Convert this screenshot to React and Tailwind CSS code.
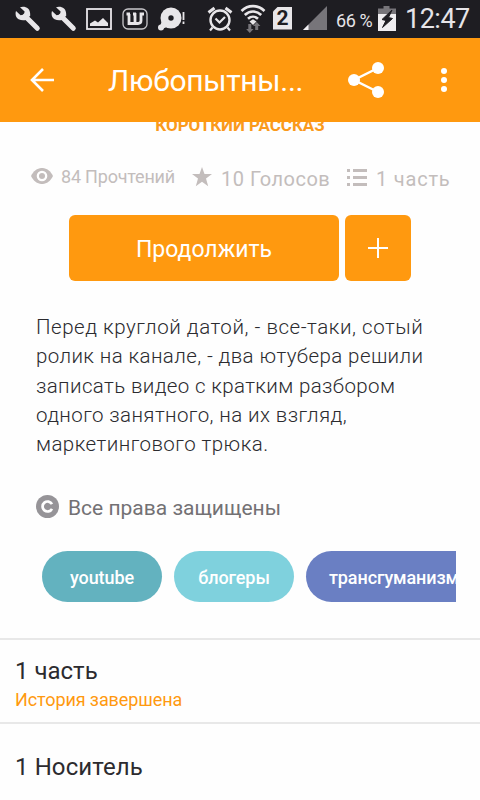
function Wrench() {
  return (
    <svg className="h-[26px] w-[26px] shrink-0" viewBox="0 0 26 26">
      <path d="M10 10 22.300 22.300" stroke="#e8e6e9" strokeWidth="5" strokeLinecap="round" />
      <path d="M5 1.200 9.600 5.400 9 8.600 5.600 9.200 1 5C-.1 8.500 1 11.800 3.600 13.300c2.400 1.200 5 1.300 7.400.7l4.200-4.200C15.300 7 15 4.400 13 2.500 11 .7 7.800.2 5 1.200Z" fill="#e8e6e9" />
    </svg>
  );
}

function StatusBar() {
  return (
    <div className="flex h-[38px] shrink-0 items-center bg-[#1e1d22] pl-[15px] text-[#e6e4e8]">
      <Wrench />
      <div className="w-[10px] shrink-0" />
      <Wrench />
      <svg className="ml-[9px] h-[22px] w-[26px] shrink-0" viewBox="0 0 26 22">
        <rect x="1" y="1" width="24" height="20" fill="none" stroke="#e8e6e9" strokeWidth="1.8" />
        <path d="M4 18v-2.500l5-3 3 2 5-4.500 5 5v3Z" fill="#e8e6e9" />
      </svg>
      <svg className="ml-[10px] h-[22px] w-[26px] shrink-0" viewBox="0 0 26 22">
        <rect x="1" y="1" width="24" height="20" rx="5" fill="none" stroke="#c9c7cb" strokeWidth="1.300" />
        <path d="M4.500 6h3.500M7 6V15.500H16c2 0 3-1 3-3V6h3M13 5v10.500M11 6h3" fill="none" stroke="#e8e6e9" strokeWidth="2.800" />
      </svg>
      <svg className="ml-[10px] h-[24px] w-[27px] shrink-0" viewBox="0 0 27 24">
        <circle cx="13" cy="11" r="10.500" fill="#e8e6e9" />
        <path d="m4 14-2 5 2 3 5-2 3-2Z" fill="#e8e6e9" />
        <circle cx="3" cy="20.500" r="3" fill="#e8e6e9" />
        <circle cx="13" cy="11" r="2.700" fill="#1e1d22" />
        <path d="M25.500 5v8M25.500 14.500V17" stroke="#e8e6e9" strokeWidth="1.800" />
      </svg>
      <svg className="ml-[22px] h-[26px] w-[26px] shrink-0" viewBox="0 0 26 26" fill="none" stroke="#e8e6e9">
        <circle cx="13" cy="14" r="9.500" strokeWidth="2.400" />
        <path d="m8.500 12.500 4 4 5.500-5.500M5.500 21.500l-2.500 3M20.500 21.500l2.500 3" strokeWidth="2.200" />
        <path d="m1.500 6.500 6-4.500M24.500 6.500l-6-4.500" strokeWidth="3" />
      </svg>
      <svg className="ml-[7px] h-[30px] w-[26px] shrink-0" viewBox="0 0 26 30" fill="none" stroke="#e8e6e9">
        <path d="M1.500 7c6.500-6.500 16.500-6.500 23 0M4.800 11c4.800-4.700 11.600-4.700 16.400 0M8 14.800c3-2.800 7-2.800 10 0" strokeWidth="2.600" />
        <path d="m9.500 17.500 3.500-2.200 3.500 2.200-3.500 3.500Z" fill="#e8e6e9" stroke="none" />
        <path d="M8.300 20h3v5h2.200l-3.700 4-3.700-4h2.200ZM15.200 26h3v-4h2.200l-3.700-4-3.700 4h2.200Z" fill="#77757a" stroke="none" />
      </svg>
      <div className="mt-[-2px] ml-[7px] flex h-[23px] w-[19px] shrink-0 items-center justify-center bg-[#e8e6e9] pt-px text-[21px] leading-none font-bold text-[#1e1d22] [clip-path:polygon(5px_0,100%_0,100%_100%,0_100%,0_5px)]">
        2
      </div>
      <svg className="mt-[-2px] ml-[11px] h-[24px] w-[24px] shrink-0" viewBox="0 0 24 24">
        <path d="M24 0v24H0Z" fill="#77757a" />
        <path d="M5.500 18.500v5.500H0Z" fill="#f2f0f3" />
      </svg>
      <div className="ml-[9px] w-[41px] shrink-0 pt-[2px] text-[18px] tracking-[-0.4px] whitespace-nowrap">66 %</div>
      <svg className="mt-[-2px] ml-[1px] h-[25px] w-[18px] shrink-0" viewBox="0 0 18 25">
        <path d="M5.500 0h6v2.500H18V8H0V2.500h5.500Z" fill="#77757a" />
        <path d="M0 8h18v17H0Z" fill="#f0eef1" />
        <path d="m14 4-10 9.500 4 1L4.500 21.500 14.500 12.500l-4-1Z" fill="#1e1d22" stroke="#1e1d22" />
      </svg>
      <div className="ml-[9px] pt-px text-[27px] tracking-[-0.5px] whitespace-nowrap">12:47</div>
    </div>
  );
}

function AppBar() {
  return (
    <header className="flex h-[84px] shrink-0 items-center bg-[#ff990f] text-white">
      <svg className="ml-[30px] h-[24px] w-[24px] shrink-0" viewBox="0 0 24 24" fill="none" stroke="white" strokeWidth="2.600">
        <path d="M24 12H2M13 1 2 12l11 11" />
      </svg>
      <h1 className="ml-[54px] w-[196px] shrink-0 text-[30px] tracking-[-0.3px] whitespace-nowrap">Любопытны...</h1>
      <svg className="ml-[44px] h-[36px] w-[36px] shrink-0" viewBox="0 0 36 36" fill="white">
        <path d="M30 6 6 18l24 12" fill="none" stroke="white" strokeWidth="2.500" />
        <circle cx="30" cy="6" r="6" />
        <circle cx="6" cy="18" r="6" />
        <circle cx="30" cy="30" r="6" />
      </svg>
      <svg className="ml-[57px] h-[24px] w-[6px] shrink-0" viewBox="0 0 6 24" fill="white">
        <circle cx="3" cy="3" r="3" />
        <circle cx="3" cy="12" r="3" />
        <circle cx="3" cy="21" r="3" />
      </svg>
    </header>
  );
}

function Stats() {
  return (
    <div className="flex h-[40px] shrink-0 items-center pl-[31px] text-[#c3bdbc]">
      <svg className="mt-[-2px] h-[16px] w-[22px] shrink-0" viewBox="0 0 22 16">
        <path d="M0 8C5-2.700 17-2.700 22 8 17 18.700 5 18.700 0 8Z" fill="currentColor" />
        <circle cx="11" cy="8" r="5.300" fill="white" />
        <circle cx="11" cy="8" r="3" fill="currentColor" />
      </svg>
      <div className="mt-[-2px] ml-[8px] w-[115px] shrink-0 text-[18px] tracking-[-0.2px] whitespace-nowrap">84 Прочтений</div>
      <svg className="ml-[16px] h-[20px] w-[20px] shrink-0" viewBox="0 0 20 20" fill="currentColor">
        <path d="m10 0 2.500 7H20l-6 4.600 2.200 7.600-6.200-4.500-6.200 4.500L6 11.600 0 7h7.500Z" />
      </svg>
      <div className="ml-[9px] w-[110px] shrink-0 pt-[4px] text-[20px] tracking-[0.5px] whitespace-nowrap">10 Голосов</div>
      <svg className="ml-[16px] h-[17px] w-[20px] shrink-0" viewBox="0 0 20 17" fill="currentColor">
        <path d="M0 0h3v3H0ZM6 0h14v3H6ZM0 7h3v3H0ZM6 7h14v3H6ZM0 14h3v3H0ZM6 14h14v3H6Z" />
      </svg>
      <div className="ml-[9px] pt-[4px] text-[20px] tracking-[0.8px] whitespace-nowrap">1 часть</div>
    </div>
  );
}

export default function App() {
  return (
    <div className="flex h-[800px] w-[480px] flex-col overflow-hidden bg-[#fefefe] font-['Roboto','Noto_Sans',sans-serif]">
      <StatusBar />
      <AppBar />
      <main className="flex flex-1 flex-col overflow-hidden">
        <div className="flex h-[35px] shrink-0 justify-center overflow-hidden">
          <div className="mt-[-8px] h-[22px] text-[17px] leading-[22px] font-bold tracking-[-0.050px] whitespace-nowrap text-[#fa9a1c]">КОРОТКИЙ РАССКАЗ</div>
        </div>
        <Stats />
        <div className="mt-[18px] flex h-[66px] shrink-0 gap-[6px] pl-[69px] text-white">
          <button className="flex w-[270px] items-center justify-center rounded-[6px] bg-[#ff990f] pt-[4px] text-[23px]">Продолжить</button>
          <button className="flex w-[66px] items-center justify-center rounded-[6px] bg-[#ff990f]">
            <svg className="h-[20px] w-[20px]" viewBox="0 0 20 20" stroke="white" strokeWidth="2">
              <path d="M10 0v20M0 10h20" />
            </svg>
          </button>
        </div>
        <div className="mt-[32px] flex h-[147px] shrink-0 flex-col pl-[36px] text-[20.500px] leading-[29.300px] font-light whitespace-nowrap text-[#2b2b2f]">
          <div className="tracking-[0.54px]">Перед круглой датой, - все-таки, сотый</div>
          <div className="tracking-[0.4px]">ролик на канале, - два ютубера решили</div>
          <div className="tracking-[0.37px]">записать видео с кратким разбором</div>
          <div className="tracking-[0.4px]">одного занятного, на их взгляд,</div>
          <div className="tracking-[0.44px]">маркетингового трюка.</div>
        </div>
        <div className="mt-[31px] flex h-[32px] shrink-0 items-center pl-[36px] text-[#737174]">
          <svg className="mt-[-2px] h-[23px] w-[23px] shrink-0" viewBox="0 0 23 23">
            <circle cx="11.500" cy="11.500" r="11.500" fill="#969498" />
            <path d="M16 9.200a5 5 0 1 0 0 4.600" fill="none" stroke="white" strokeWidth="2.700" />
          </svg>
          <div className="ml-[9px] pt-[3px] text-[21px] whitespace-nowrap">Все права защищены</div>
        </div>
        <div className="mt-[28px] ml-[42px] flex h-[51px] w-[414px] shrink-0 gap-[12px] overflow-hidden text-[18px] font-medium tracking-[-0.1px] whitespace-nowrap text-white">
          <div className="flex w-[120px] shrink-0 items-center justify-center rounded-full bg-[#63b2bf] pt-[2px]">youtube</div>
          <div className="flex w-[120px] shrink-0 items-center justify-center rounded-full bg-[#7fd1dd] pt-[2px]">блогеры</div>
          <div className="flex w-[180px] shrink-0 items-center rounded-full bg-[#6a7fc3] pt-[2px] pl-[23px]">трансгуманизм</div>
        </div>
        <section className="mt-[36px] h-[86px] shrink-0 border-y-2 border-[#e8e8e8] pl-[15px] whitespace-nowrap">
          <div className="mt-[15px] text-[24px] leading-[32px] text-[#2c2b2f]">1 часть</div>
          <div className="text-[18px] leading-[26px] tracking-[-0.1px] text-[#ff990f]">История завершена</div>
        </section>
        <div className="mt-[27px] pl-[15px] text-[24px] leading-[32px] tracking-[0.1px] whitespace-nowrap text-[#2c2b2f]">1 Носитель</div>
      </main>
    </div>
  );
}
